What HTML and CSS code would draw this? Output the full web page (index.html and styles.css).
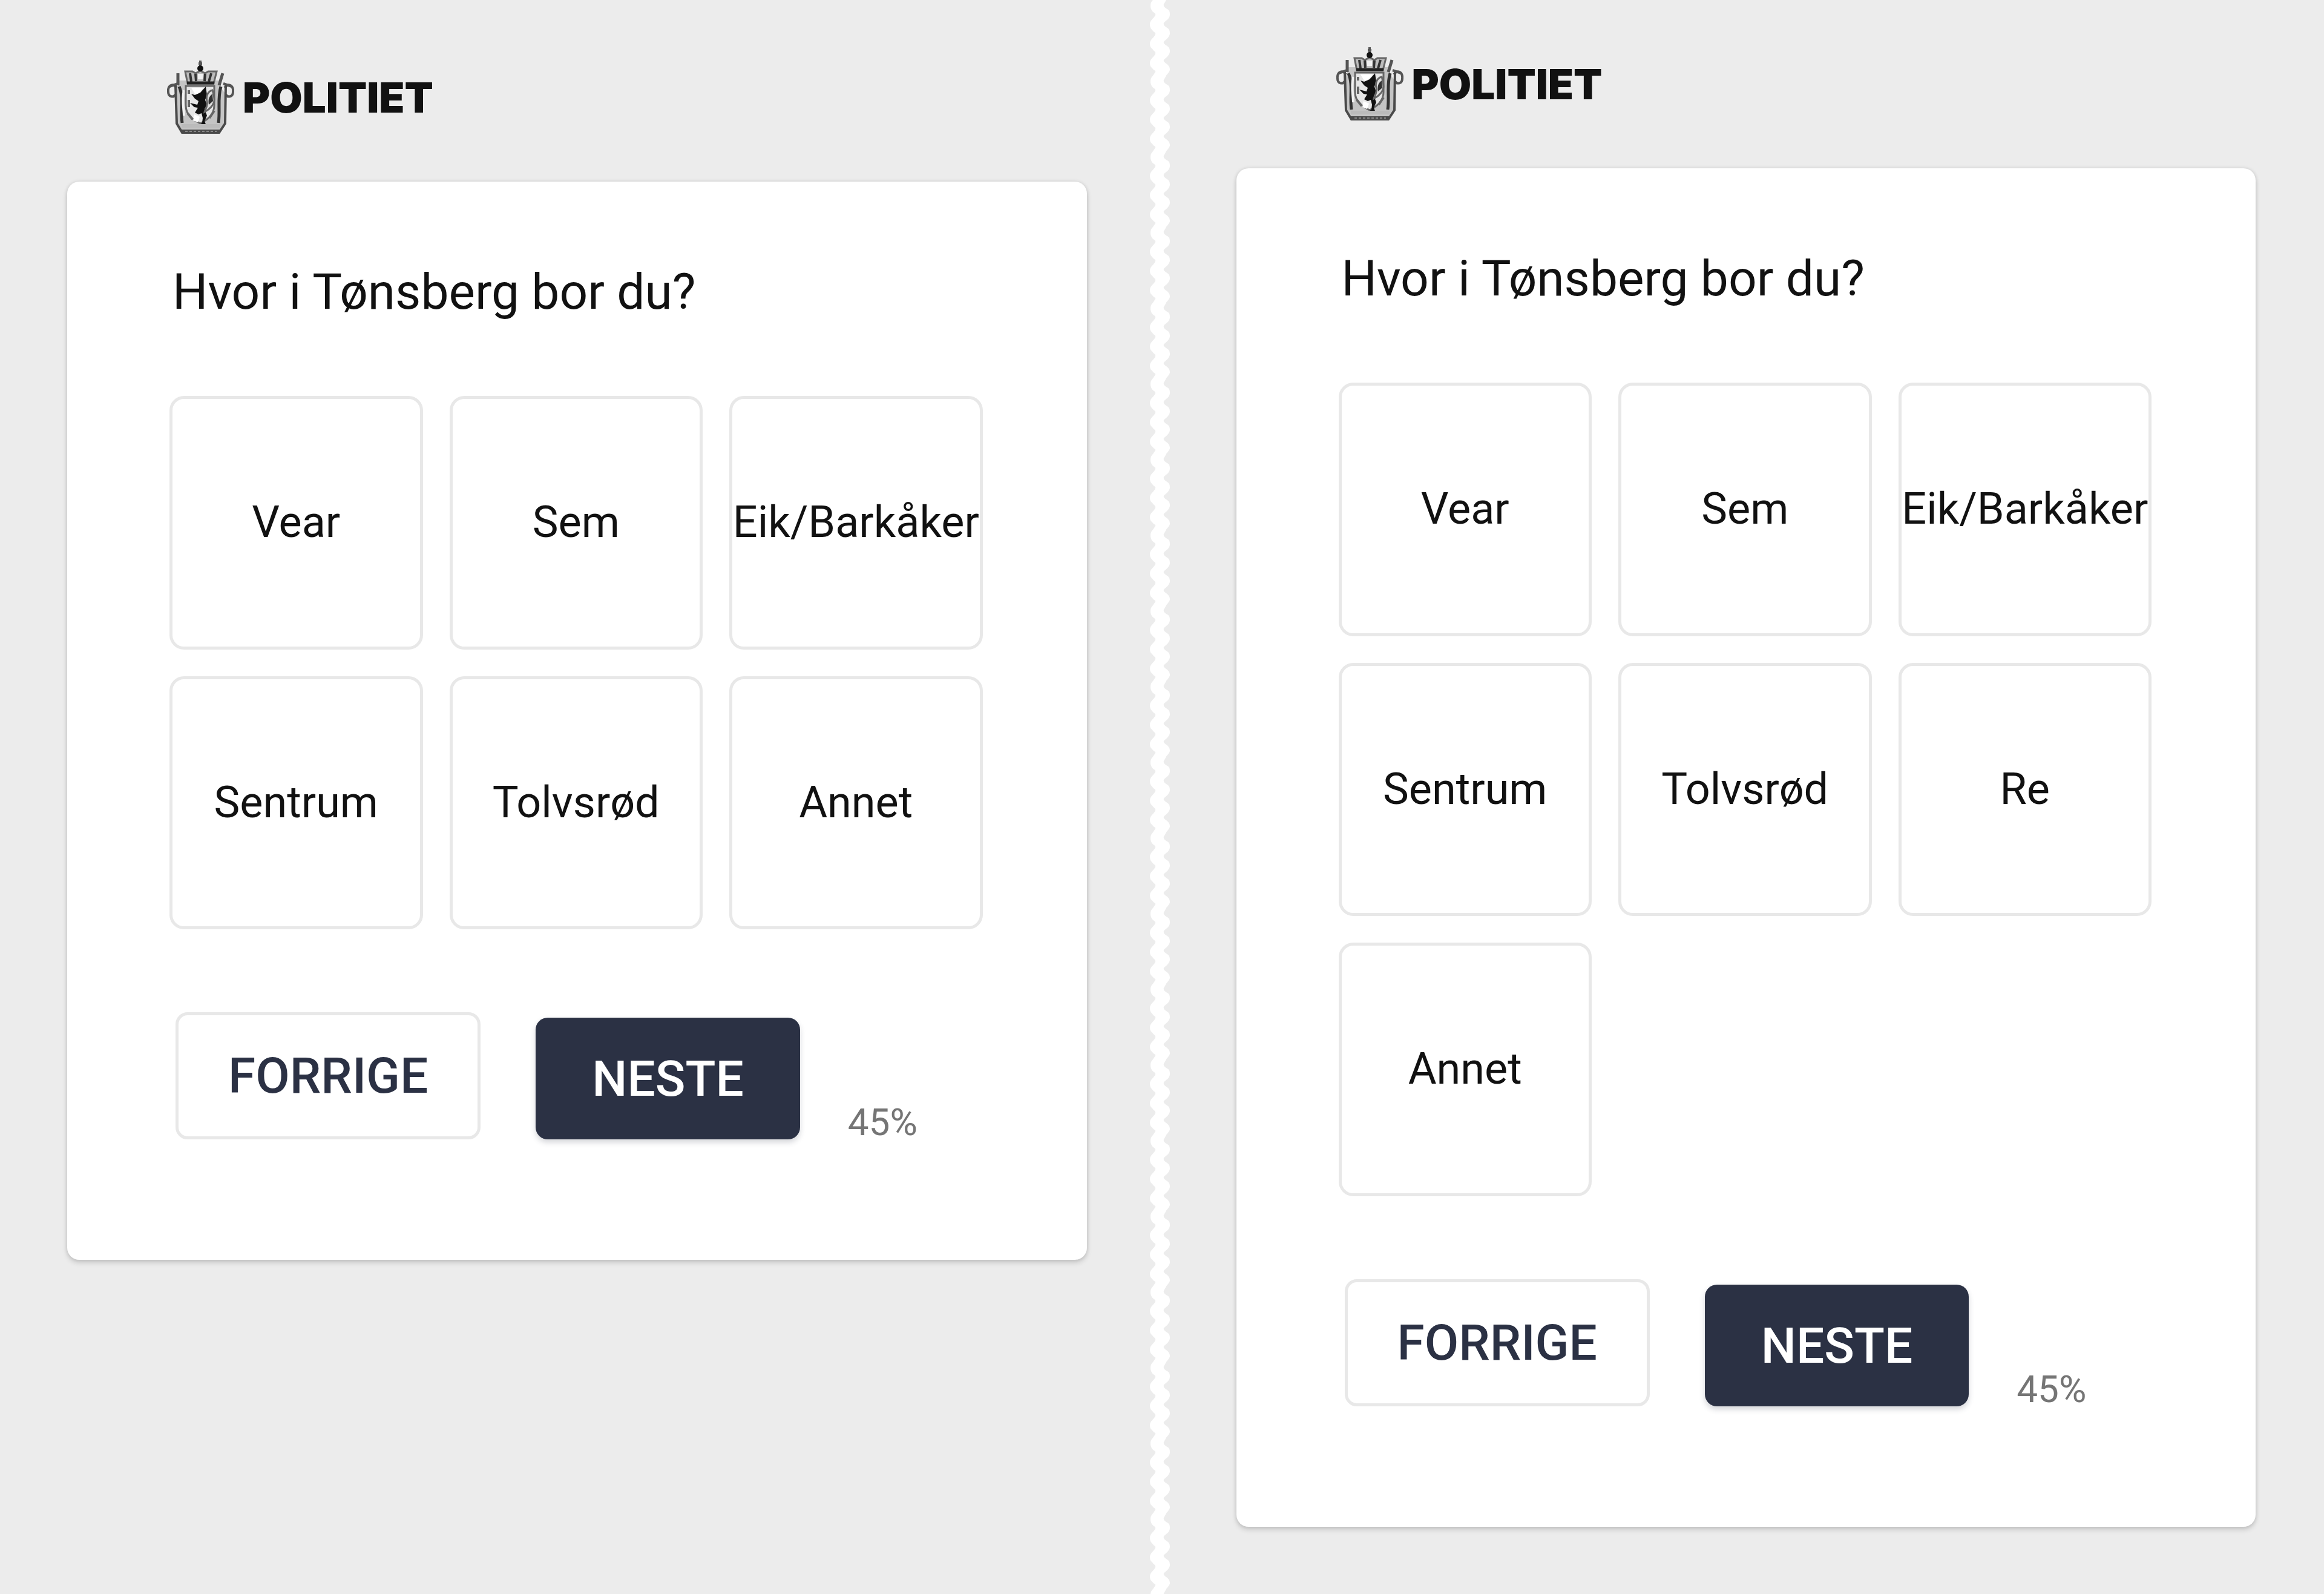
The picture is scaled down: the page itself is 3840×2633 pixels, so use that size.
FILE: index.html
```html
<!DOCTYPE html>
<html lang="no">
<head>
<meta charset="utf-8">
<meta name="viewport" content="width=device-width, initial-scale=1">
<title>Politiet</title>
<link rel="stylesheet" href="styles.css">
</head>
<body>
<svg class="defs" aria-hidden="true">
  <symbol id="crest" viewBox="0 0 111 124">
    <path d="M20 34h69v12l6 8v50l-10 15H27l-11-15V50z" fill="#c4c4c4"/>
    <path d="M16 46C8 36 1 44 2 53c0 8 9 10 12 4M95 46c8-10 15-2 14 7 0 8-9 10-12 4" fill="none" stroke="#555" stroke-width="4"/>
    <path d="M4 44l14-5M107 44l-14-5" stroke="#555" stroke-width="4"/>
    <path d="M18 22v20M92 22l-6 20" stroke="#555" stroke-width="5"/>
    <path d="M14 42l2 63 9 15h61l10-15 1-63" fill="none" stroke="#4a4a4a" stroke-width="4"/>
    <path d="M20 44c8 18 2 40 5 60M89 44c-6 18-1 40-4 60" fill="none" stroke="#333" stroke-width="5"/>
    <path d="M28 50c-4 16 0 32 0 42" fill="none" stroke="#f1f1f1" stroke-width="4"/>
    <path d="M31 43h47v32c0 16-12 24-23 30-12-6-24-14-24-30z" fill="#e6e6e6" stroke="#666" stroke-width="3"/>
    <path d="M40 46h20l-8 10h-6z" fill="#fff"/>
    <path d="M45 90l9 4-3 9-8-3z" fill="#fff"/>
    <path d="M30 19h12l5 3 8-4 8 4 5-3h14l-5 20H34z" fill="#bdbdbd" stroke="#666" stroke-width="3"/>
    <path d="M38 22l2 14M47 23l1 12M63 23l-1 12M73 22l-4 14" stroke="#333" stroke-width="4"/>
    <path d="M51 23h8v9h-8z" fill="#f0f0f0"/>
    <path d="M33 38h45" stroke="#222" stroke-width="5"/>
    <path d="M55 1v17M52 6h6" stroke="#555" stroke-width="4"/>
    <circle cx="55" cy="14" r="5" fill="#111"/>
    <path d="M64 44l-9 10-9 4-6-2 6 8 6 4-2 6-12-3 7 7 6 1-5 8 6 3 5-2 2 8-1 8-7 5h14l-3-8 4-9-4-11 4-6-3-9 3-8z" fill="#111"/>
    <path d="M75 50c-8 2-11 10-9 18s-3 13-4 18c8-4 16-12 16-20s-1-10-3-16z" fill="#e0e0e0" stroke="#666" stroke-width="3"/>
    <path d="M75 56c-7 5-7 11-6 18l7-6z" fill="#333"/>
    <path d="M36 50v6M36 66v12M34 88l8 10M78 84l-8 12" stroke="#666" stroke-width="4"/>
    <path d="M24 109h64" stroke="#bbb" stroke-width="6"/>
    <path d="M22 115l6 6h56l6-6z" fill="#4a4a4a"/>
    <path d="M30 118h52" stroke="#888" stroke-width="2" stroke-dasharray="4 3"/>
  </symbol>
</svg>
<div class="compare">
  <main class="screen">
    <header class="brand">
      <svg class="brand-crest" aria-hidden="true"><use href="#crest"/></svg>
      <span class="brand-name">POLITIET</span>
    </header>
    <form class="card">
      <h1 class="question">Hvor i Tønsberg bor du?</h1>
      <div class="options">
        <label class="option"><input type="radio" name="before"><span>Vear</span></label>
        <label class="option"><input type="radio" name="before"><span>Sem</span></label>
        <label class="option"><input type="radio" name="before"><span>Eik/Barkåker</span></label>
        <label class="option"><input type="radio" name="before"><span>Sentrum</span></label>
        <label class="option"><input type="radio" name="before"><span>Tolvsrød</span></label>
        <label class="option"><input type="radio" name="before"><span>Annet</span></label>
      </div>
      <div class="actions">
        <button class="button button-back" type="button">FORRIGE</button>
        <button class="button button-next" type="button">NESTE</button>
        <span class="progress">45%</span>
      </div>
    </form>
  </main>
  <svg class="tear" aria-hidden="true">
    <defs>
      <pattern id="wave" width="33" height="125" patternUnits="userSpaceOnUse">
        <path fill="#fff" d="M5 0C0 4 0 12 3 17S10 21 9 25 0 33 0 40s3 8 5 11 5 2 4 6-9 8-9 15 3 7 5 10 5 3 4 7-9 8-9 15 3 7 5 10 5 2 4 5L5 125H27C21 130 33 120 33 115s-3-8-6-10-5-4-4-6 10-7 10-14-3-8-6-10-5-4-4-6 10-7 10-14-3-8-6-10-5-4-4-7 10-6 10-14-3-8-6-10-5-4-4-7L27 0z"/>
      </pattern>
    </defs>
    <rect width="100%" height="100%" fill="url(#wave)"/>
  </svg>
  <section class="screen screen-after">
    <header class="brand">
      <svg class="brand-crest" aria-hidden="true"><use href="#crest"/></svg>
      <span class="brand-name">POLITIET</span>
    </header>
    <form class="card">
      <h1 class="question">Hvor i Tønsberg bor du?</h1>
      <div class="options">
        <label class="option"><input type="radio" name="after"><span>Vear</span></label>
        <label class="option"><input type="radio" name="after"><span>Sem</span></label>
        <label class="option"><input type="radio" name="after"><span>Eik/Barkåker</span></label>
        <label class="option"><input type="radio" name="after"><span>Sentrum</span></label>
        <label class="option"><input type="radio" name="after"><span>Tolvsrød</span></label>
        <label class="option"><input type="radio" name="after"><span>Re</span></label>
        <label class="option"><input type="radio" name="after"><span>Annet</span></label>
      </div>
      <div class="actions">
        <button class="button button-back" type="button">FORRIGE</button>
        <button class="button button-next" type="button">NESTE</button>
        <span class="progress">45%</span>
      </div>
    </form>
  </section>
</div>
</body>
</html>
```
FILE: styles.css
```css
* {
  box-sizing: border-box;
}

body {
  margin: 0;
  background: #ececec;
  color: #111;
  font-family: Roboto, "Liberation Sans", sans-serif;
}

.defs {
  display: none;
}

.compare {
  display: grid;
  grid-template-columns: minmax(0, 1fr) 33px minmax(0, 1fr);
  min-height: 100vh;
}

.screen {
  padding: 99px 108px 100px 111px;
}

.screen-after {
  padding: 77px 113px 100px 106px;
}

.tear {
  display: block;
  width: 33px;
  height: 100%;
  margin-left: -4px;
}

.brand {
  display: flex;
  align-items: center;
  gap: 14px;
  padding-left: 165px;
  margin-bottom: 77px;
}

.brand-crest {
  width: 111px;
  height: 124px;
}

.brand-name {
  font: 900 69px/72px Inter, Roboto, sans-serif;
}

.card {
  padding: 134px 172px 199px 169px;
  border-radius: 20px;
  background: #fff;
  box-shadow: 0 0 6px rgba(0, 0, 0, 0.12), 0 5px 8px rgba(0, 0, 0, 0.14);
}

.question {
  margin: 0 0 124px;
  padding-left: 5px;
  font-size: 82px;
  font-weight: 400;
  line-height: 96px;
}

.options {
  display: grid;
  grid-template-columns: repeat(3, minmax(0, 1fr));
  gap: 44px;
}

.option {
  display: flex;
  align-items: center;
  justify-content: center;
  aspect-ratio: 1;
  border: 5px solid #e8e8e8;
  border-radius: 24px;
  font-size: 72px;
  line-height: 84px;
  white-space: nowrap;
  cursor: pointer;
}

.option input {
  position: absolute;
  opacity: 0;
}

.option:focus-within {
  border-color: #2b3144;
}

.actions {
  display: flex;
  align-items: flex-end;
  margin-top: 137px;
  padding-left: 10px;
}

.button {
  border: 0;
  border-radius: 20px;
  font: 500 82px/96px Roboto, "Liberation Sans", sans-serif;
  cursor: pointer;
}

.button-back {
  padding: 52px 82px;
  border: 5px solid #e8e8e8;
  background: #fff;
  color: #2b3144;
}

.button-next {
  margin-left: 91px;
  padding: 53px 93px 52px;
  background: #2b3144;
  color: #fff;
  box-shadow: 0 5px 10px rgba(43, 49, 68, 0.2);
}

.progress {
  margin-left: 79px;
  color: #757575;
  font-size: 62px;
  line-height: 56px;
}
```
